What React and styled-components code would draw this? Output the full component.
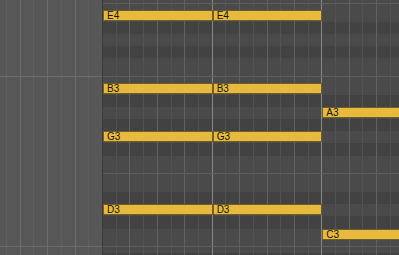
import React from "react";
import styled, { createGlobalStyle, css } from "styled-components";

const ROW = 12.17;
const STEP = 13.71;

const Global = createGlobalStyle`
  html, body { margin: 0; padding: 0; background: #4a4a4a; }
  body { width: 399px; height: 255px; overflow: hidden; font-family: "Liberation Sans", Arial, sans-serif; }
`;

const Roll = styled.div`
  width: 399px;
  height: 255px;
  overflow: hidden;
  display: flex;
  flex-direction: column;
`;

const Scroller = styled.div`
  display: flex;
  flex-direction: column;
  margin-top: -2.47px;
`;

const hLine = (color) => css`
  linear-gradient(
    to bottom,
    transparent calc(50% - 0.5px),
    ${color} calc(50% - 0.5px),
    ${color} calc(50% + 0.5px),
    transparent calc(50% + 0.5px)
  )
`;

const Row = styled.div`
  display: flex;
  height: ${ROW}px;
  flex: none;
`;

const OutCell = styled.div`
  width: 102px;
  flex: none;
  background-color: #575757;
  background-image: ${(p) => (p.$line === "major" ? css`${hLine("#6d6d6d")},` : "")}
    repeating-linear-gradient(to left, transparent 0 26.42px, #6c6c6c 26.42px 27.42px),
    repeating-linear-gradient(to left, transparent 0 12.71px, #5f5f5f 12.71px 13.71px);
`;

const Lane = styled.div`
  flex: 1;
  min-width: 0;
  overflow: hidden;
  border-left: 1px solid #3b3b3b;
  background-origin: border-box;
  background-color: ${(p) => (p.$dark ? "#424242" : "#4a4a4a")};
  background-image: ${(p) => (p.$line ? css`${hLine("#5e5e5e")},` : "")}
    repeating-linear-gradient(to right, #878787 0 1px, transparent 1px 109.68px),
    repeating-linear-gradient(to right, #616161 0 1px, transparent 1px 27.42px),
    repeating-linear-gradient(to right, #525252 0 1px, transparent 1px ${STEP}px);
  display: grid;
  grid-template-columns: repeat(24, ${STEP}px);
  grid-template-rows: 100%;
`;

const Note = styled.div`
  grid-column: ${(p) => p.$start + 1} / span ${(p) => p.$len};
  grid-row: 1;
  align-self: start;
  box-sizing: border-box;
  height: ${ROW - 1}px;
  background: #e7b93c;
  border: 1px solid #6f5d2a;
  color: #141414;
  font-family: "Liberation Sans", Arial, sans-serif;
  font-size: 10px;
  line-height: 10px;
  padding-left: 3px;
  white-space: nowrap;
  overflow: hidden;
`;

const rows = [
  { dark: false, line: "minor" },
  { dark: false, notes: [["E4", 0, 8], ["E4", 8, 8]] },
  { dark: true },
  { dark: false },
  { dark: true },
  { dark: false },
  { dark: false, line: "major" },
  { dark: false, notes: [["B3", 0, 8], ["B3", 8, 8]] },
  { dark: true },
  { dark: false, notes: [["A3", 16, 8]] },
  { dark: true },
  { dark: false, notes: [["G3", 0, 8], ["G3", 8, 8]] },
  { dark: true },
  { dark: false },
  { dark: false, line: "minor" },
  { dark: false },
  { dark: true },
  { dark: false, notes: [["D3", 0, 8], ["D3", 8, 8]] },
  { dark: true },
  { dark: false, notes: [["C3", 16, 8]] },
  { dark: false, line: "major" },
  { dark: true },
];

export default function App() {
  return (
    <>
      <Global />
      <Roll>
        <Scroller>
          {rows.map((r, i) => (
            <Row key={i}>
              <OutCell $line={r.line} />
              <Lane $dark={r.dark} $line={!!r.line}>
                {(r.notes || []).map(([label, start, len], j) => (
                  <Note key={j} $start={start} $len={len}>
                    {label}
                  </Note>
                ))}
              </Lane>
            </Row>
          ))}
        </Scroller>
      </Roll>
    </>
  );
}
